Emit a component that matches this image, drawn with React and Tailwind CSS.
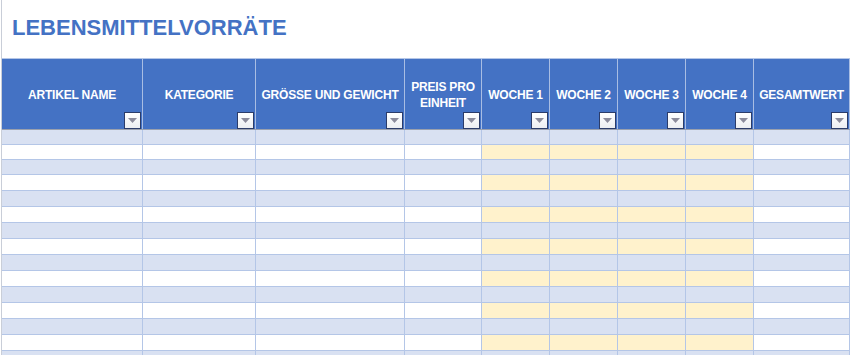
const COLS = [
  { label: ['ARTIKEL NAME'], w: 'w-[141px]', week: false },
  { label: ['KATEGORIE'], w: 'w-[113px]', week: false },
  { label: ['GRÖSSE UND GEWICHT'], w: 'w-[149px]', week: false },
  { label: ['PREIS PRO', 'EINHEIT'], w: 'w-[77px]', week: false },
  { label: ['WOCHE 1'], w: 'w-[68px]', week: true },
  { label: ['WOCHE 2'], w: 'w-[68px]', week: true },
  { label: ['WOCHE 3'], w: 'w-[68px]', week: true },
  { label: ['WOCHE 4'], w: 'w-[68px]', week: true },
  { label: ['GESAMTWERT'], w: 'w-[96px]', week: false },
];

const ROW_HEIGHTS = ['h-[15px]', 'h-[15px]', 'h-[15px]', 'h-4', 'h-4', 'h-4', 'h-4', 'h-4', 'h-4', 'h-4', 'h-4', 'h-4', 'h-4', 'h-4', 'h-4'];

function FilterButton() {
  return (
    <div className="absolute right-[1px] bottom-0 w-[17px] h-[17px] border border-[#2b3c6a] bg-gradient-to-b from-white to-[#eceef2] flex items-center justify-center">
      <svg width="9" height="5" viewBox="0 0 9 5">
        <path d="M0 0 H9 L4.5 5 Z" fill="#8c8c9c" />
      </svg>
    </div>
  );
}

function HeaderCell({ col }) {
  return (
    <div className={`${col.w} relative shrink-0 h-full border-r border-[#a9bde3] flex flex-col items-center justify-center pt-[2px]`}>
      {col.label.map((line) => (
        <span key={line} className="leading-4 whitespace-nowrap">
          {line}
        </span>
      ))}
      <FilterButton />
    </div>
  );
}

function BodyRow({ index, h }) {
  const banded = index % 2 === 0;
  return (
    <div className={`flex ${h} border-b border-[#b4c6e7]`}>
      {COLS.map((col, i) => {
        const bg = banded ? 'bg-[#d9e1f2]' : col.week ? 'bg-[#fff2cc]' : 'bg-white';
        return <div key={i} className={`${col.w} shrink-0 border-r border-[#b4c6e7] ${bg}`} />;
      })}
    </div>
  );
}

export default function App() {
  return (
    <div className="w-[851px] h-[355px] overflow-hidden bg-white" style={{ fontFamily: '"Liberation Sans", Arial, sans-serif' }}>
      <div className="ml-[1px] h-full border-l border-[#c9ced8]">
        <div className="h-[58px] pl-[10px] pt-[15px]">
          <h1 className="text-[22px] leading-[26px] font-bold text-[#4472c4]">LEBENSMITTELVORRÄTE</h1>
        </div>
        <div className="w-[848px] border-t border-[#b4c6e7]">
          <div className="flex h-[71px] bg-[#4472c4] text-white font-bold text-[12px] tracking-[-0.2px] border-b border-[#9aa0ae]">
            {COLS.map((col, i) => (
              <HeaderCell key={i} col={col} />
            ))}
          </div>
          {ROW_HEIGHTS.map((h, i) => (
            <BodyRow key={i} index={i} h={h} />
          ))}
        </div>
      </div>
    </div>
  );
}
